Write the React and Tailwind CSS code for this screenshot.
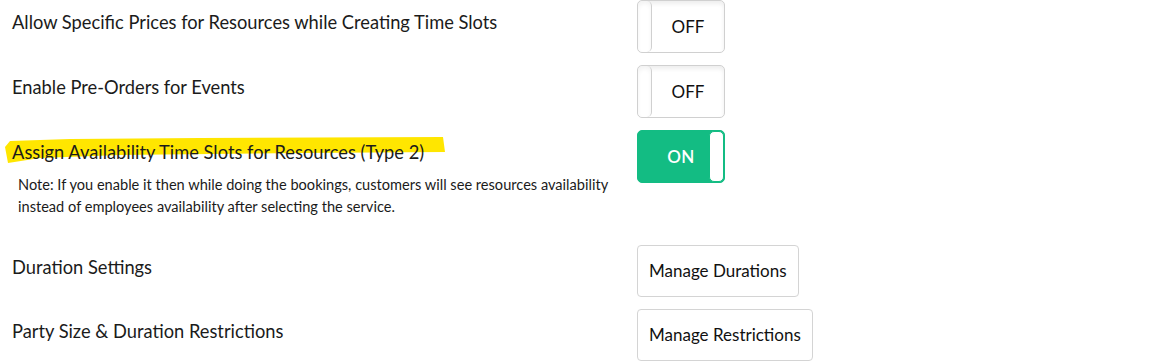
import React, { useState } from 'react'

const font = { fontFamily: 'Lato, "Noto Sans", sans-serif' }

const Toggle = ({ on, onClick }) => {
  if (on) {
    return (
      <button
        type="button"
        onClick={onClick}
        className="w-[88px] h-[53px] rounded-[5px] bg-[#13bc83] border border-[#13bc83] flex items-stretch overflow-hidden"
      >
        <span className="flex-1 flex items-center justify-center pl-[15px] text-white text-[17px] font-semibold tracking-wide">ON</span>
        <span className="w-[15px] bg-white rounded-[5px] border border-[#13bc83]"></span>
      </button>
    )
  }
  return (
    <button
      type="button"
      onClick={onClick}
      className="w-[88px] h-[53px] rounded-[5px] bg-white border border-[#d0d0d0] shadow-[inset_0_3px_4px_rgba(0,0,0,0.07)] flex items-stretch overflow-hidden"
    >
      <span className="w-[14px] bg-white rounded-[5px] border-r border-[#d0d0d0] shadow-[inset_0_3px_4px_rgba(0,0,0,0.05)]"></span>
      <span className="flex-1 flex items-center justify-center text-[17px] text-[#111]">OFF</span>
    </button>
  )
}

const Row = ({ label, highlight, note, children, className }) => (
  <div className={'flex ' + (className || '')}>
    <div className="w-[637px] shrink-0">
      <div className="relative pt-[10px] text-[18.3px] leading-6 text-[#1b1b1b]">
        {highlight && (
          <svg className="absolute left-0 top-0 w-[460px] h-[40px]" viewBox="0 0 460 40">
            <polygon
              points="5,17 10,11 70,9 200,8 443,7 445,22 300,23 120,25 40,28 8,33"
              fill="#ffe600"
            />
          </svg>
        )}
        <span className="relative pl-3">{label}</span>
      </div>
      {note && (
        <p className="mt-[10px] pl-[18px] text-[14.6px] leading-[22px] text-[#1b1b1b]">{note}</p>
      )}
    </div>
    <div>{children}</div>
  </div>
)

const Button = ({ children }) => (
  <button
    type="button"
    className="h-[52px] px-[11px] rounded-[4px] border border-[#d4d4d4] bg-white text-[17px] text-[#111]"
  >
    {children}
  </button>
)

export default function App() {
  const [prices, setPrices] = useState(false)
  const [preOrders, setPreOrders] = useState(false)
  const [resources, setResources] = useState(true)

  return (
    <main className="w-full min-h-screen bg-white" style={font}>
      <Row label="Allow Specific Prices for Resources while Creating Time Slots" className="h-[65px]">
        <Toggle on={prices} onClick={() => setPrices(!prices)} />
      </Row>
      <Row label="Enable Pre-Orders for Events" className="h-[65px]">
        <Toggle on={preOrders} onClick={() => setPreOrders(!preOrders)} />
      </Row>
      <Row
        label="Assign Availability Time Slots for Resources (Type 2)"
        highlight
        className="h-[115px]"
        note={
          <>
            Note: If you enable it then while doing the bookings, customers will see resources availability
            <br />
            instead of employees availability after selecting the service.
          </>
        }
      >
        <Toggle on={resources} onClick={() => setResources(!resources)} />
      </Row>
      <Row label="Duration Settings" className="h-[64px]">
        <Button>Manage Durations</Button>
      </Row>
      <Row label="Party Size & Duration Restrictions">
        <Button>Manage Restrictions</Button>
      </Row>
    </main>
  )
}
